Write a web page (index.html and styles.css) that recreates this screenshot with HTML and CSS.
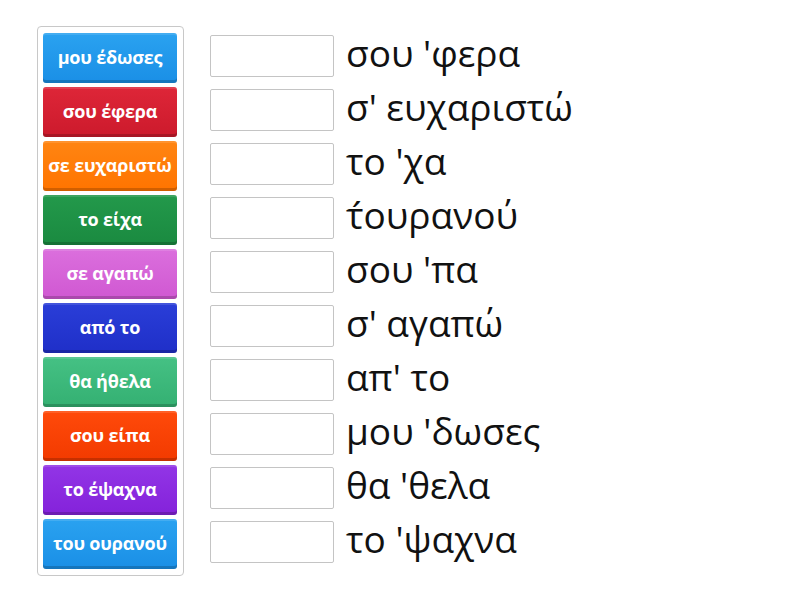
FILE: index.html
```html
<!DOCTYPE html>
<html lang="el">
<head>
<meta charset="utf-8">
<link rel="stylesheet" href="styles.css">
</head>
<body>
<div class="page">
  <div class="bank">
    <div class="tile c-blue">μου έδωσες</div>
    <div class="tile c-red">σου έφερα</div>
    <div class="tile c-orange">σε ευχαριστώ</div>
    <div class="tile c-green">το είχα</div>
    <div class="tile c-pink">σε αγαπώ</div>
    <div class="tile c-navy">από το</div>
    <div class="tile c-teal">θα ήθελα</div>
    <div class="tile c-redorange">σου είπα</div>
    <div class="tile c-purple">το έψαχνα</div>
    <div class="tile c-blue">του ουρανού</div>
  </div>
  <div class="rows">
    <div class="row"><div class="slot"></div><span class="word">σου 'φερα</span></div>
    <div class="row"><div class="slot"></div><span class="word">σ' ευχαριστώ</span></div>
    <div class="row"><div class="slot"></div><span class="word">το 'χα</span></div>
    <div class="row"><div class="slot"></div><span class="word">τ́ουρανού</span></div>
    <div class="row"><div class="slot"></div><span class="word">σου 'πα</span></div>
    <div class="row"><div class="slot"></div><span class="word">σ' αγαπώ</span></div>
    <div class="row"><div class="slot"></div><span class="word">απ' το</span></div>
    <div class="row"><div class="slot"></div><span class="word">μου 'δωσες</span></div>
    <div class="row"><div class="slot"></div><span class="word">θα 'θελα</span></div>
    <div class="row"><div class="slot"></div><span class="word">το 'ψαχνα</span></div>
  </div>
</div>
</body>
</html>
```
FILE: styles.css
```css
html, body {
  margin: 0;
  padding: 0;
  background: #ffffff;
}
body {
  font-family: "Open Sans", "Noto Sans", "DejaVu Sans", sans-serif;
}
.page {
  display: flex;
  align-items: flex-start;
  padding: 26px 0 0 37px;
}
.bank {
  display: flex;
  flex-direction: column;
  gap: 4px;
  padding: 6px 6px 6px 5px;
  border: 1px solid #c8c8c8;
  border-radius: 4px;
  width: 134px;
}
.tile {
  height: 50px;
  box-sizing: border-box;
  border-radius: 3px;
  display: flex;
  align-items: center;
  justify-content: center;
  color: #fff;
  font-weight: 700;
  font-size: 18px;
  letter-spacing: -0.2px;
  white-space: nowrap;
  padding-bottom: 2px;
  box-shadow: inset 0 -3px 0 rgba(0,0,0,0.18), inset 0 2px 0 rgba(255,255,255,0.12);
}
.c-blue { background: linear-gradient(#2aa2f0, #1a8fe6); }
.c-red { background: linear-gradient(#de2638, #cc1a2c); }
.c-orange { background: linear-gradient(#ff8512, #ff7400); }
.c-green { background: linear-gradient(#23994b, #1a8a40); }
.c-pink { background: linear-gradient(#db6fdd, #d058d2); }
.c-navy { background: linear-gradient(#2a3ed8, #1f2fc8); }
.c-teal { background: linear-gradient(#45c184, #34b072); }
.c-redorange { background: linear-gradient(#ff4a0a, #f23a00); }
.c-purple { background: linear-gradient(#9235e6, #8422da); }
.rows {
  display: flex;
  flex-direction: column;
  gap: 12px;
  margin: 9px 0 0 26px;
}
.row {
  display: flex;
  align-items: center;
  gap: 12px;
  height: 42px;
}
.slot {
  width: 124px;
  height: 42px;
  box-sizing: border-box;
  border: 1px solid #c4c4c4;
  border-radius: 2px;
  background: #fff;
}
.word {
  font-size: 37px;
  color: #111;
  line-height: 42px;
  white-space: nowrap;
  margin-top: -6px;
}
```
